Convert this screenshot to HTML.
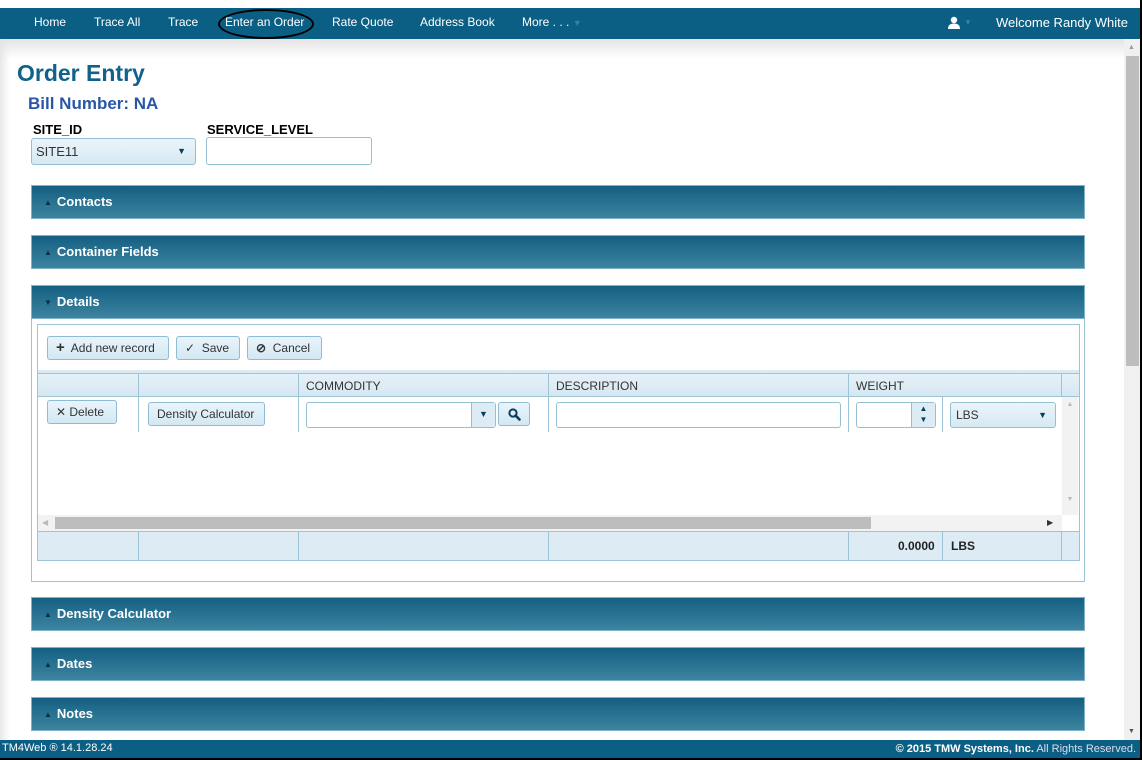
<!DOCTYPE html>
<html><head><style>
*{box-sizing:border-box;margin:0;padding:0}
body{width:1142px;height:760px;position:relative;overflow:hidden;background:#fff;font-family:"Liberation Sans",Arial,sans-serif;font-size:12px;color:#333}
.abs{position:absolute}
#nav{left:0;top:8px;width:1142px;height:31px;background:#0b5f85;color:#fff;font-size:12px}
#nav span{position:absolute;top:7px}
#main{left:0;top:39px;width:1124px;height:701px;background:linear-gradient(90deg,#e8e8e8 0,#fff 10px);}
#shadow{left:0;top:39px;width:1124px;height:20px;background:linear-gradient(#e4e4e4,rgba(255,255,255,0))}
.hdr{position:absolute;left:31px;width:1054px;height:34px;background:linear-gradient(#145f82,#3d84a0);border:1px solid #7fb3c9;color:#fff;font-weight:bold;font-size:13px;padding:8px 0 0 12px}
.hdr i{font-style:normal;font-size:8px;color:#0a2f45;margin-right:5px;position:relative;top:-1px}
.btn{position:absolute;height:24px;border:1px solid #8fbcd2;border-radius:3px;background:linear-gradient(#e9f4fa,#d4e8f3);color:#333;font-size:12px;padding:4px 8px;white-space:nowrap}
.inp{position:absolute;border:1px solid #95bfd3;border-radius:3px;background:#fff}
.vl{position:absolute;width:1px;background:#9cc4d6}
</style></head><body>
<div id="nav" class="abs">
<span style="left:34px">Home</span><span style="left:94px">Trace All</span><span style="left:168px">Trace</span>
<span style="left:225px">Enter an Order</span><span style="left:332px">Rate Quote</span><span style="left:420px">Address Book</span>
<span style="left:522px">More . . . <b style="color:#3b7fa0;font-size:9px">▼</b></span>
<svg style="position:absolute;left:948px;top:8px" width="12" height="13" viewBox="0 0 12 13"><circle cx="6" cy="4" r="3.2" fill="#fff"/><path d="M0 13 Q0 7.5 6 7.5 Q12 7.5 12 13Z" fill="#fff"/></svg>
<span style="left:964px;top:10px;font-size:8px;color:#3b7fa0">▼</span>
<span style="left:996px;font-size:13px">Welcome Randy White</span>
</div>
<div class="abs" style="left:218px;top:9px;width:96px;height:30px;border:2px solid #000;border-radius:50%"></div>
<div id="main" class="abs"></div>
<div id="shadow" class="abs"></div>
<div class="abs" style="left:1124px;top:39px;width:16px;height:701px;background:#f0f0f0"></div>
<div class="abs" style="left:1126px;top:56px;width:13px;height:310px;background:#bdbdbd"></div>
<div class="abs" style="left:1128px;top:44px;font-size:7px;color:#999">▲</div>
<div class="abs" style="left:1128px;top:728px;font-size:7px;color:#555">▼</div>
<div class="abs" style="left:1140px;top:0;width:2px;height:760px;background:#000"></div>

<div class="abs" style="left:17px;top:60px;font-size:23px;font-weight:bold;color:#11628a">Order Entry</div>
<div class="abs" style="left:28px;top:94px;font-size:17px;font-weight:bold;color:#2a56a6">Bill Number: NA</div>
<div class="abs" style="left:33px;top:122px;font-size:13px;font-weight:bold;color:#000">SITE_ID</div>
<div class="abs" style="left:207px;top:122px;font-size:13px;font-weight:bold;color:#000">SERVICE_LEVEL</div>
<div class="inp" style="left:31px;top:138px;width:165px;height:27px;background:linear-gradient(#eaf4fa,#d6e9f3);padding:5px 4px;font-size:13px">SITE11<span style="position:absolute;right:9px;top:7px;font-size:9px;color:#0a3f5c">▼</span></div>
<div class="inp" style="left:206px;top:137px;width:166px;height:28px"></div>

<div class="hdr" style="top:185px"><i>▲</i>Contacts</div>
<div class="hdr" style="top:235px"><i>▲</i>Container Fields</div>
<div class="hdr" style="top:285px"><i>▼</i>Details</div>
<div class="abs" style="left:31px;top:319px;width:1054px;height:263px;border:1px solid #9cc4d6;border-top:none"></div>
<div class="abs" style="left:37px;top:324px;width:1043px;height:237px;border:1px solid #9cc4d6"></div>
<div class="abs" style="left:38px;top:370px;width:1041px;height:3px;background:#dbeaf3"></div>
<div class="btn" style="left:47px;top:336px;width:122px"><b style="font-size:15px;line-height:12px">+</b>&nbsp; Add new record</div>
<div class="btn" style="left:176px;top:336px;width:64px">✓&nbsp; Save</div>
<div class="btn" style="left:247px;top:336px;width:75px"><b>⊘</b>&nbsp; Cancel</div>
<div class="abs" style="left:38px;top:373px;width:1041px;height:24px;background:linear-gradient(#e6f1f8,#d5e7f1);border-bottom:1px solid #9cc4d6;border-top:1px solid #9cc4d6"></div>
<div class="abs" style="left:306px;top:379px;font-size:12px">COMMODITY</div>
<div class="abs" style="left:556px;top:379px;font-size:12px">DESCRIPTION</div>
<div class="abs" style="left:856px;top:379px;font-size:12px">WEIGHT</div>
<div class="vl" style="left:138px;top:373px;height:59px"></div>
<div class="vl" style="left:298px;top:373px;height:59px"></div>
<div class="vl" style="left:548px;top:373px;height:59px"></div>
<div class="vl" style="left:848px;top:373px;height:59px"></div>
<div class="vl" style="left:942px;top:397px;height:35px"></div>
<div class="vl" style="left:1061px;top:373px;height:24px"></div>
<div class="btn" style="left:47px;top:400px;width:70px">✕ Delete</div>
<div class="btn" style="left:148px;top:402px;width:117px">Density Calculator</div>
<div class="inp" style="left:306px;top:402px;width:190px;height:26px"><div style="position:absolute;right:0;top:0;width:24px;height:24px;background:#dcebf4;border-left:1px solid #95bfd3;font-size:9px;color:#0a3f5c;text-align:center;padding-top:6px">▼</div></div>
<div class="btn" style="left:498px;top:402px;width:32px;padding:0"><svg style="position:absolute;left:9px;top:5px" width="13" height="13" viewBox="0 0 13 13"><circle cx="5" cy="5" r="3.6" fill="none" stroke="#0a3f5c" stroke-width="2"/><path d="M7.6 7.6 L11.5 11.5" stroke="#0a3f5c" stroke-width="2.6" stroke-linecap="round"/></svg></div>
<div class="inp" style="left:556px;top:402px;width:285px;height:26px"></div>
<div class="inp" style="left:856px;top:402px;width:80px;height:26px"><div style="position:absolute;right:0;top:0;width:24px;height:24px;background:#dcebf4;border-left:1px solid #95bfd3;font-size:8px;color:#0a3f5c;text-align:center;line-height:11px">▲<br>▼</div></div>
<div class="inp" style="left:950px;top:402px;width:106px;height:26px;background:linear-gradient(#eaf4fa,#d6e9f3);padding:5px 5px">LBS<span style="position:absolute;right:8px;top:7px;font-size:9px;color:#0a3f5c">▼</span></div>
<div class="abs" style="left:1062px;top:397px;width:16px;height:118px;background:#f2f2f2;font-size:7px;color:#bbb;text-align:center;padding-top:4px">▲<div style="margin-top:88px">▼</div></div>
<div class="abs" style="left:38px;top:515px;width:1024px;height:16px;background:#f2f2f2"></div>
<div class="abs" style="left:55px;top:517px;width:816px;height:12px;background:#bdbdbd"></div>
<div class="abs" style="left:42px;top:518px;font-size:8px;color:#bbb">◀</div>
<div class="abs" style="left:1047px;top:518px;font-size:8px;color:#333">▶</div>
<div class="abs" style="left:38px;top:531px;width:1041px;height:29px;background:#dcebf4;border-top:1px solid #9cc4d6"></div>
<div class="vl" style="left:138px;top:531px;height:29px"></div>
<div class="vl" style="left:298px;top:531px;height:29px"></div>
<div class="vl" style="left:548px;top:531px;height:29px"></div>
<div class="vl" style="left:848px;top:531px;height:29px"></div>
<div class="vl" style="left:942px;top:531px;height:29px"></div>
<div class="vl" style="left:1061px;top:531px;height:29px"></div>
<div class="abs" style="left:898px;top:539px;font-weight:bold;color:#222">0.0000</div>
<div class="abs" style="left:951px;top:539px;font-weight:bold;color:#222">LBS</div>

<div class="hdr" style="top:597px"><i>▲</i>Density Calculator</div>
<div class="hdr" style="top:647px"><i>▲</i>Dates</div>
<div class="hdr" style="top:697px"><i>▲</i>Notes</div>

<div class="abs" style="left:0;top:740px;width:1140px;height:18px;background:#0b5f85;color:#fff;font-size:11px">
<span style="position:absolute;left:2px;top:2px">TM4Web ® 14.1.28.24</span>
<span style="position:absolute;right:4px;top:3px"><b>© 2015 TMW Systems, Inc.</b> <span style="color:#dde">All Rights Reserved.</span></span></div>
<div class="abs" style="left:0;top:758px;width:1142px;height:2px;background:#000"></div>
</body></html>
